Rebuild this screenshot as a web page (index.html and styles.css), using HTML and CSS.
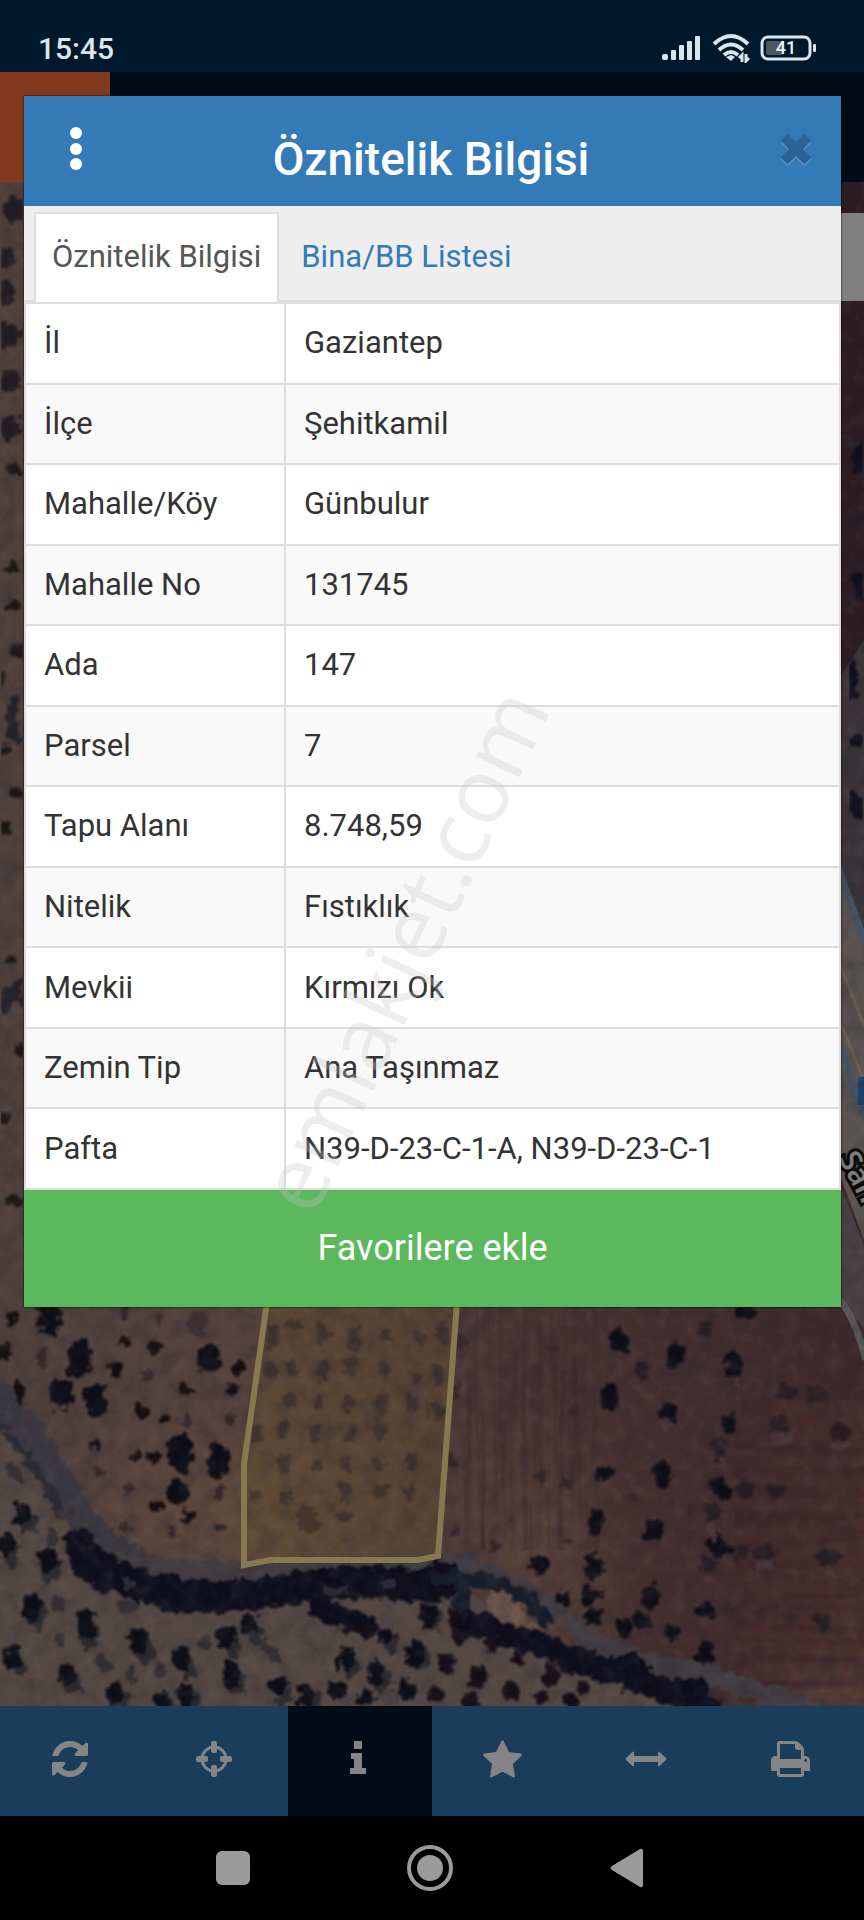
FILE: index.html
```html
<!DOCTYPE html>
<html lang="tr">
  <head>
    <meta charset="utf-8">
    <meta name="viewport" content="width=device-width, initial-scale=1">
    <title>Öznitelik Bilgisi</title>
    <link rel="stylesheet" href="styles.css">
  </head>

  <body>
    <div class="statusbar">
      <span class="clock">15:45</span>
      <div class="status-icons">
        <svg width="40" height="26" viewBox="0 0 40 26" fill="#dce6ee">
          <rect x="0" y="19" width="6" height="6" rx="2"/>
          <rect x="9" y="15" width="5" height="10" rx="1"/>
          <rect x="17" y="10" width="5" height="15" rx="1"/>
          <rect x="25" y="6" width="5" height="19" rx="1"/>
          <rect x="33" y="1" width="5" height="24" rx="1"/>
        </svg>
        <svg width="38" height="30" viewBox="0 0 38 30" fill="none" stroke="#dce6ee" stroke-width="4">
          <path d="M2 11Q19-5 36 11"/>
          <path d="M7 17Q19 6 31 17"/>
          <path d="M12 22Q19 16 26 22"/>
          <path d="M14 24L19 28L23 24L19 22Z" fill="#dce6ee" stroke="none"/>
          <path d="M30 29V22L27 25M34 21V28L37 25" stroke-width="3"/>
        </svg>
        <svg class="battery" width="56" height="26" viewBox="0 0 56 26">
          <rect x="2" y="2" width="48" height="22" rx="6" fill="none" stroke="#dce6ee" stroke-width="3"/>
          <rect x="6" y="6" width="17" height="14" rx="2" fill="#485864"/>
          <rect x="53" y="9" width="3" height="8" rx="1" fill="#dce6ee"/>
          <text x="26" y="19" text-anchor="middle" fill="#eef4f8">41</text>
        </svg>
      </div>
    </div>

    <div class="appbar"><div class="app-logo"></div></div>

    <div class="map">
      <svg class="map-image" viewBox="0 182 864 1524" preserveAspectRatio="xMidYMid slice">
        <defs>
          <linearGradient id="soil" x1="0" x2="1" y1="0" y2="0">
            <stop offset="0" stop-color="#4f403d"/>
            <stop offset=".3" stop-color="#55423b"/>
            <stop offset=".5" stop-color="#4e3a37"/>
            <stop offset=".75" stop-color="#432e2f"/>
            <stop offset="1" stop-color="#3d282b"/>
          </linearGradient>
          <radialGradient id="warm">
            <stop offset="0" stop-color="#644a3b" stop-opacity=".7"/>
            <stop offset="1" stop-color="#644a3b" stop-opacity="0"/>
          </radialGradient>
          <linearGradient id="field" x1="0" x2="1" y1="0" y2="1">
            <stop offset="0" stop-color="#40292b"/>
            <stop offset="1" stop-color="#4b302d"/>
          </linearGradient>
          <filter id="rough" x="-5%" y="-5%" width="110%" height="110%">
            <feTurbulence type="fractalNoise" baseFrequency=".1" numOctaves="3" seed="4" result="n"/>
            <feDisplacementMap in="SourceGraphic" in2="n" scale="16" xChannelSelector="R" yChannelSelector="G"/>
            <feGaussianBlur stdDeviation="1.3"/>
          </filter>
          <filter id="mottle" x="0" y="0" width="100%" height="100%">
            <feTurbulence type="fractalNoise" baseFrequency=".05" numOctaves="4" seed="9"/>
            <feColorMatrix values="0 0 0 0 .02  0 0 0 0 .02  0 0 0 0 .03  2.4 0 0 0 -1"/>
          </filter>
          <filter id="light" x="0" y="0" width="100%" height="100%">
            <feTurbulence type="fractalNoise" baseFrequency=".07" numOctaves="3" seed="21"/>
            <feColorMatrix values="0 0 0 0 .3  0 0 0 0 .25  0 0 0 0 .25  2.4 0 0 0 -1.1"/>
          </filter>
          <filter id="furrow" x="0" y="0" width="100%" height="100%">
            <feTurbulence type="fractalNoise" baseFrequency=".14 .006" numOctaves="2" seed="2"/>
            <feColorMatrix values="0 0 0 0 .03  0 0 0 0 .01  0 0 0 0 .02  1.2 0 0 0 -.5"/>
          </filter>
          <filter id="furrow-h" x="0" y="0" width="100%" height="100%">
            <feTurbulence type="fractalNoise" baseFrequency=".006 .09" numOctaves="2" seed="5"/>
            <feColorMatrix values="0 0 0 0 .03  0 0 0 0 .01  0 0 0 0 .02  1.2 0 0 0 -.5"/>
          </filter>
        </defs>

        <!-- ground -->
        <rect y="182" width="864" height="1524" fill="url(#soil)"/>
        <rect x="735" y="1400" width="129" height="306" fill="url(#field)"/>
        <ellipse cx="230" cy="1520" rx="220" ry="110" fill="url(#warm)"/>
        <ellipse cx="530" cy="1560" rx="120" ry="170" fill="url(#warm)" opacity=".8"/>
        <ellipse cx="830" cy="1700" rx="110" ry="50" fill="url(#warm)" opacity=".7"/>
        <rect x="460" y="1300" width="140" height="250" filter="url(#furrow)" opacity=".8"/>
        <rect x="735" y="1440" width="129" height="266" filter="url(#furrow-h)" opacity=".8"/>
        <path d="M0 1420Q60 1500 110 1560T300 1590T480 1600T700 1706H0Z" fill="#554843"/>

        <!-- left strip -->
        <g filter="url(#rough)" fill="none" stroke-linecap="round">
          <path d="M14 210h1M2 258h1M4 294h1M6 335h1M8 382h1M8 428h1" stroke="#211f21" stroke-width="24"/>
          <path d="M15 470h0M12 568h0M14 605h0M18 650h0M2 680h0M6 750h0M16 792h0M4 830h0M12 960h0M20 1050h0M4 1118h0M14 1200h0" stroke="#1e1719" stroke-width="13"/>
          <path d="M16 700q-12 20 2 40M20 985q-20 10-14 22M2 1005q14-10 20-6" stroke="#20202a" stroke-width="10"/>
        </g>

        <!-- right strip with the road -->
        <rect x="838" y="182" width="26" height="500" fill="#2c1c22"/>
        <path d="M838 680L864 640V950L838 870Z" fill="#3a3439"/>
        <g filter="url(#rough)" fill="none" stroke-linecap="round">
          <path d="M862 450v14M862 580v8M850 670v24M858 740h0M852 800l10 12" stroke="#11111b" stroke-width="16"/>
        </g>
        <path d="M838 860L864 940V1240L838 1170Z" fill="#58534f"/>
        <path d="M838 868L866 945M838 1040L866 1122" stroke="#465264" stroke-width="7"/>
        <path d="M838 1016L866 1086M838 960L866 1030" stroke="#6a6152" stroke-width="3"/>
        <path d="M838 1180L866 1250V1330L838 1300Z" fill="#494144"/>
        <path d="M840 1300Q856 1320 866 1360" stroke="#5b5657" stroke-width="7" fill="none"/>
        <rect x="858" y="1077" width="10" height="28" fill="#1c4068"/>

        <!-- stream bed -->
        <g filter="url(#rough)" fill="none" stroke-linecap="round" stroke-linejoin="round">
          <path d="M-5 1392Q35 1440 65 1490Q90 1545 140 1565" stroke="#3b3840" stroke-width="30"/>
          <path d="M120 1562Q200 1574 290 1572Q400 1560 460 1562Q530 1590 570 1625T700 1672L820 1712" stroke="#423c42" stroke-width="20"/>
          <path d="M-5 1420Q40 1470 60 1510" stroke="#2b2932" stroke-width="10"/>
          <path d="M80 1545Q100 1578 160 1590T280 1590T400 1584T440 1575" stroke="#0e101e" stroke-width="32"/>
          <path d="M170 1602h34M320 1606q28 18 48 20M80 1556q10 20 24 26M220 1592h24" stroke="#10111c" stroke-width="22"/>
          <path d="M330 1590h12M384 1584h8M126 1584h4" stroke="#2a2a38" stroke-width="8"/>
          <path d="M440 1580Q510 1570 545 1620M462 1590v18" stroke="#181a29" stroke-width="16"/>
          <path d="M466 1622Q530 1640 570 1656T650 1685L710 1708" stroke="#0e101e" stroke-width="24"/>
          <path d="M570 1660h8M622 1668h14M686 1690h8" stroke="#0e101e" stroke-width="28"/>
          <path d="M488 1590Q515 1594 527 1620L548 1628Q510 1630 486 1612Z" fill="#6c564c" stroke="none"/>
        </g>

        <!-- trees, left field -->
        <g filter="url(#rough)" fill="none" stroke-linecap="round">
          <path d="M49 1314v8M79 1352v14M95 1396v8M60 1392l4 6M208 1356v6M180 1446v16M219 1458v10M177 1490v4" stroke="#0f0f14" stroke-width="23"/>
          <path d="M125 1343h0M154 1347h0M117 1371h0M238 1364v4M143 1411v3M233 1391h0M185 1390h0M165 1418h0M95 1446h0M135 1455h0M154 1458h0M155 1506h0M187 1517h0M4 1350v6M20 1388v8M12 1318h0" stroke="#170e10" stroke-width="12"/>
          <path d="M148 1373v5M185 1418v6M128 1488v3M218 1490v8M220 1527h0M174 1532h0M125 1527h0M228 1420h0M42 1355v6M98 1473h0M158 1318h0M125 1314h0" stroke="#36282a" stroke-width="10"/>
          <path d="M197 1320v8" stroke="#3e3033" stroke-width="18"/>
        </g>

        <!-- trees below the stream -->
        <g filter="url(#rough)" fill="none" stroke-linecap="round">
          <path d="M38 1612v10M90 1626v14M52 1566v8M30 1520v4M10 1552v8M18 1664v4M72 1680v6M144 1644v10M190 1664v6M232 1642v6M236 1678v12M120 1698v6M192 1700v4M168 1710h0M256 1632v3M352 1664v8M382 1678v6M392 1644h0M421 1656v6M312 1698v6M284 1692v4M434 1616v6" stroke="#2c2b2d" stroke-width="17"/>
          <path d="M32 1603v10M85 1618v14M48 1556v8M22 1512v6M6 1542v8M13 1656v6M66 1670v8M138 1636v10M182 1655v8M226 1633v8M230 1668v14M114 1690v6M186 1692v4M162 1702h0M250 1622v3M346 1656v8M376 1670v8M386 1636h0M415 1650v6M306 1692v8M334 1690h4M365 1700h2M406 1688v4M428 1612v8M278 1684v4" stroke="#101014" stroke-width="17"/>
          <path d="M446 1660v8M460 1635v2M478 1672v10M518 1656v4M551 1670v8M512 1688v4M541 1698v2M582 1688h0M470 1702h2M434 1696h4M570 1702h0M453 1614h0M492 1644h0M365 1632h0" stroke="#131012" stroke-width="15"/>
          <path d="M10 1466l12 14M52 1532v8M62 1514h6M58 1602v4M120 1606h14M60 1636v4M100 1660l6 8M132 1670v6M205 1640v4M265 1646l12 14M160 1668v4" stroke="#362e33" stroke-width="11"/>
        </g>

        <!-- trees, right fields -->
        <g filter="url(#rough)" fill="none" stroke-linecap="round">
          <path d="M616 1336l6 8M674 1350v10M735 1360v10M610 1394v8M668 1412v4M729 1422v4M662 1470v8M604 1472h0M718 1484l6 8M597 1518v6M655 1526v8M716 1544l6 6M593 1564v8M743 1308h4M594 1616h0M624 1626h0M650 1594v8M705 1610h2M674 1632h0M705 1652v4M539 1562v4M562 1598h0M642 1620h0M590 1596h0" stroke="#0e0a12" stroke-width="17"/>
          <path d="M705 1328h0M642 1372h0M783 1392h4M812 1394h8M776 1424h6M838 1432h6M720 1446v6M712 1508v6M706 1566h6M773 1490h4M742 1490h6M740 1552h0M760 1552h8M825 1558h6M820 1620h4" stroke="#271a22" stroke-width="15"/>
          <path d="M730 1610h0M792 1618h0M762 1614h0M552 1350h0M460 1340v4M455 1390v8M450 1456v4M572 1410v4M566 1484h0M540 1476h0M512 1520h0M566 1542h0M494 1546h0M456 1532h0M632 1496h0M688 1510h0" stroke="#36272a" stroke-width="10"/>
          <path d="M776 1440h14M838 1446h6M722 1464h2M712 1528v6M760 1566h8M828 1574h6M706 1580h4M738 1384h0M664 1424h4" stroke="#4d3c42" stroke-width="9" opacity=".7"/>
        </g>

        <!-- selected parcel -->
        <path class="parcel-fill" d="M267 1302L244 1464V1565L270 1560H418L438 1556L457 1302"/>
        <g filter="url(#rough)" fill="none" stroke-linecap="round" stroke="#352a28">
          <path d="M272 1330v14M294 1324h0M322 1328v14M354 1332v14M386 1336h0M418 1338h0M270 1368v4M292 1368h0M322 1366v8M352 1362v12M384 1370h0M416 1378h0M288 1402h0M320 1402h0M350 1404h0M382 1396v16M412 1400v4M282 1428v4M316 1430v6M350 1434h0M380 1426v10M284 1460v8M316 1466h0M346 1460v6M380 1466h0M410 1458v6M256 1432v4M254 1494h0M284 1496h0M346 1490v6M380 1490h0M410 1490v4M344 1518h0M442 1330v6M440 1370v8M436 1410v6" stroke-width="13" opacity=".7"/>
          <path d="M308 1514v10" stroke-width="20" opacity=".6"/>
        </g>

        <rect y="182" width="864" height="1524" filter="url(#mottle)" opacity=".3"/>
        <rect y="182" width="864" height="1524" filter="url(#light)" opacity=".1"/>
        <path class="parcel" d="M267 1302L244 1464V1565L270 1560H418L438 1556L457 1302"/>
        <text class="road-name" transform="translate(838 1158) rotate(62)">San</text>
      </svg>
      <div class="map-control"></div>
    </div>

    <div class="toolbar">
      <button class="tool" aria-label="Yenile">
        <svg width="36" height="36" viewBox="0 0 1536 1536"><path d="M1511 928q0 5-1 7-64 268-268 434.500t-478 166.500q-146 0-282.500-55t-243.500-157l-129 129q-19 19-45 19t-45-19-19-45v-448q0-26 19-45t45-19h448q26 0 45 19t19 45-19 45l-137 137q71 66 161 102t187 36q134 0 250-65t186-179q11-17 53-117 8-23 30-23h192q13 0 22.500 9.500t9.500 22.500zm25-800v448q0 26-19 45t-45 19h-448q-26 0-45-19t-19-45 19-45l138-138q-148-137-349-137-134 0-250 65t-186 179q-11 17-53 117-8 23-30 23h-199q-13 0-22.500-9.500t-9.500-22.500v-7q65-268 270-434.500t480-166.500q146 0 284 55.500t245 156.500l130-129q19-19 45-19t45 19 19 45z"/></svg>
      </button>
      <button class="tool" aria-label="Konum">
        <svg width="36" height="36" viewBox="0 0 36 36"><circle cx="18" cy="18" r="12" fill="none" stroke="#858585" stroke-width="3"/><rect x="15" y="0" width="6" height="12" rx="2"/><rect x="15" y="24" width="6" height="12" rx="2"/><rect x="0" y="15" width="12" height="6" rx="2"/><rect x="24" y="15" width="12" height="6" rx="2"/></svg>
      </button>
      <button class="tool active" aria-label="Bilgi">
        <svg width="36" height="36" viewBox="0 0 36 36"><path d="M14 0h8v8h-8zM11 12h11v15h4v6H10v-6h4v-9h-3z"/></svg>
      </button>
      <button class="tool" aria-label="Favoriler">
        <svg width="39" height="38" viewBox="0 0 1664 1600"><path d="M1664 615q0 22-26 48l-363 354 86 500q1 7 1 20 0 21-10.500 35.500t-30.500 14.500q-19 0-40-12l-449-236-449 236q-22 12-40 12-21 0-31.500-14.500t-10.500-35.500q0-6 2-20l86-500-364-354q-25-27-25-48 0-37 56-46l502-73 225-455q19-41 49-41t49 41l225 455 502 73q56 9 56 46z"/></svg>
      </button>
      <button class="tool" aria-label="Ölçüm">
        <svg width="42" height="36" viewBox="0 0 42 36"><path d="M1 17L8 10.500Q9 10 9 12V15H33V12Q33 10 34 10.500L41 17Q42 18 41 19L34 25.500Q33 26 33 24V21H9V24Q9 26 8 25.500L1 19Q0 18 1 17Z"/></svg>
      </button>
      <button class="tool" aria-label="Yazdır">
        <svg width="39" height="36" viewBox="0 128 1664 1536"><path d="M384 1536h896v-256h-896v256zm0-640h896v-384h-160q-40 0-68-28t-28-68v-160h-640v640zm1152 64q0-26-19-45t-45-19-45 19-19 45 19 45 45 19 45-19 19-45zm128 0v416q0 13-9.500 22.500t-22.500 9.500h-224v160q0 40-28 68t-68 28h-960q-40 0-68-28t-28-68v-160h-224q-13 0-22.500-9.500t-9.500-22.500v-416q0-79 56.500-135.500t135.500-56.500h64v-544q0-40 28-68t68-28h672q40 0 88 20t76 48l152 152q28 28 48 76t20 88v256h64q79 0 135.500 56.500t56.500 135.500z"/></svg>
      </button>
    </div>

    <div class="navbar">
      <button class="nav" aria-label="Son uygulamalar"><svg width="48" height="48" viewBox="0 0 48 48"><rect x="7" y="7" width="34" height="34" rx="6"/></svg></button>
      <button class="nav" aria-label="Ana ekran"><svg width="48" height="48" viewBox="0 0 48 48"><circle cx="24" cy="24" r="21" fill="none" stroke="#9b9b9b" stroke-width="4"/><circle cx="24" cy="24" r="13"/></svg></button>
      <button class="nav" aria-label="Geri"><svg width="48" height="48" viewBox="0 0 48 48"><path d="M9 22L37 5Q40 4 40 7V41Q40 44 37 43L9 26Q6 24 9 22Z"/></svg></button>
    </div>

    <div class="modal">
      <div class="modal-header">
        <button class="menu" aria-label="Menü"><svg width="12" height="44" viewBox="0 0 12 44" fill="#fff"><circle cx="6" cy="6" r="6"/><circle cx="6" cy="22" r="6"/><circle cx="6" cy="37" r="6"/></svg></button>
        <h1 class="modal-title">Öznitelik Bilgisi</h1>
        <button class="close" aria-label="Kapat"><svg width="32" height="34" viewBox="0 0 32 34" fill="none" stroke-width="10"><path d="M4 6L28 30M28 6L4 30" stroke="#5b93c5"/><path d="M4 4L28 28M28 4L4 28" stroke="#2b6396"/></svg></button>
      </div>

      <div class="tabs">
        <a href="#oznitelik" class="tab active">Öznitelik Bilgisi</a>
        <a href="#bina" class="tab">Bina/BB Listesi</a>
      </div>

      <table class="info">
        <tr><th>İl</th><td>Gaziantep</td></tr>
        <tr><th>İlçe</th><td>Şehitkamil</td></tr>
        <tr><th>Mahalle/Köy</th><td>Günbulur</td></tr>
        <tr><th>Mahalle No</th><td>131745</td></tr>
        <tr><th>Ada</th><td>147</td></tr>
        <tr><th>Parsel</th><td>7</td></tr>
        <tr><th>Tapu Alanı</th><td>8.748,59</td></tr>
        <tr><th>Nitelik</th><td>Fıstıklık</td></tr>
        <tr><th>Mevkii</th><td>Kırmızı Ok</td></tr>
        <tr><th>Zemin Tip</th><td>Ana Taşınmaz</td></tr>
        <tr><th>Pafta</th><td>N39-D-23-C-1-A, N39-D-23-C-1</td></tr>
      </table>

      <button class="favorite">Favorilere ekle</button>
      <div class="watermark">emlakjet.com</div>
    </div>
  </body>
</html>
```

FILE: styles.css
```css
* {
box-sizing: border-box;
}

body {
margin: 0;
min-height: 100vh;
display: flex;
flex-direction: column;
position: relative;
background: #000;
font-family: Roboto, "Liberation Sans", sans-serif;
font-size: 31px;
color: #333;
}

button {
border: none;
background: none;
padding: 0;
font-family: inherit;
cursor: pointer;
}

svg {
display: block;
}

/* Phone status bar */
.statusbar {
height: 72px;
padding: 24px 48px 0 38px;
display: flex;
justify-content: space-between;
align-items: center;
background: #00182b;
}

.clock {
color: #dce6ee;
font-size: 30px;
font-weight: 500;
}

.status-icons {
display: flex;
align-items: center;
gap: 10px;
}

.battery text {
font-size: 18px;
font-weight: 500;
}

/* App behind the dialog */
.appbar {
height: 110px;
background: #000d18;
}

.app-logo {
width: 110px;
height: 110px;
background: #83391b;
}

.map {
flex: 1;
position: relative;
overflow: hidden;
background: #4a3836;
}

.map-image {
position: absolute;
width: 100%;
height: 100%;
}

.parcel-fill {
fill: #65502f;
fill-opacity: .4;
}

.parcel {
fill: none;
stroke: #86794e;
stroke-width: 6;
}

.road-name {
font-family: "Noto Sans", sans-serif;
font-size: 30px;
font-weight: 600;
fill: #7c7c7c;
stroke: #0b0b0b;
stroke-width: 6px;
paint-order: stroke;
}

.map-control {
position: absolute;
top: 31px;
right: 0;
width: 60px;
height: 88px;
background: #808080;
}

.toolbar {
height: 110px;
display: grid;
grid-template-columns: repeat(6, 1fr);
background: #1a3d5b;
}

.tool {
display: flex;
align-items: center;
justify-content: center;
padding-bottom: 4px;
padding-right: 4px;
}

.tool svg {
fill: #858585;
}

.tool.active {
background: #000d18;
}

.navbar {
height: 104px;
display: flex;
align-items: center;
justify-content: center;
gap: 149px;
padding-right: 4px;
background: #000;
}

.nav svg {
fill: #9b9b9b;
}

/* Dialog */
.modal {
position: absolute;
top: 96px;
left: 24px;
right: 23px;
background: #fff;
box-shadow: 0 0 2px #000;
}

.modal-header {
height: 110px;
padding: 0 29px 0 46px;
display: flex;
justify-content: space-between;
align-items: center;
background: #337ab7;
}

.menu {
padding-bottom: 4px;
}

.close {
padding-bottom: 2px;
}

.modal-title {
margin: 0;
padding-top: 16px;
color: #fff;
font-size: 46px;
font-weight: 500;
line-height: 54px;
}

.tabs {
display: flex;
gap: 4px;
padding: 6px 10px 0;
background: #eee;
border-bottom: 2px solid #ddd;
}

.tab {
padding: 23px 16px;
border: 2px solid transparent;
border-bottom: none;
line-height: 40px;
color: #337ab7;
text-decoration: none;
}

.tab.active {
margin-bottom: -2px;
padding-bottom: 25px;
background: #fff;
border-color: #ddd;
color: #555;
}

.info {
width: 100%;
height: 888px;
border-collapse: collapse;
}

.info th,
.info td {
padding: 0 18px;
border: 2px solid #ddd;
line-height: 40px;
text-align: left;
font-weight: normal;
}

.info th {
width: 260px;
}

.info tr:nth-child(even) {
background: #f9f9f9;
}

.favorite {
display: block;
width: 100%;
height: 117px;
padding-bottom: 2px;
background: #5cb85c;
color: #fff;
font-size: 36px;
}

.watermark {
position: absolute;
top: 793px;
left: 50%;
width: 600px;
margin-left: -332px;
line-height: 120px;
text-align: center;
font-family: "Open Sans", sans-serif;
font-size: 90px;
color: rgba(195, 195, 195, .3);
transform: rotate(-65deg);
pointer-events: none;
}
```
